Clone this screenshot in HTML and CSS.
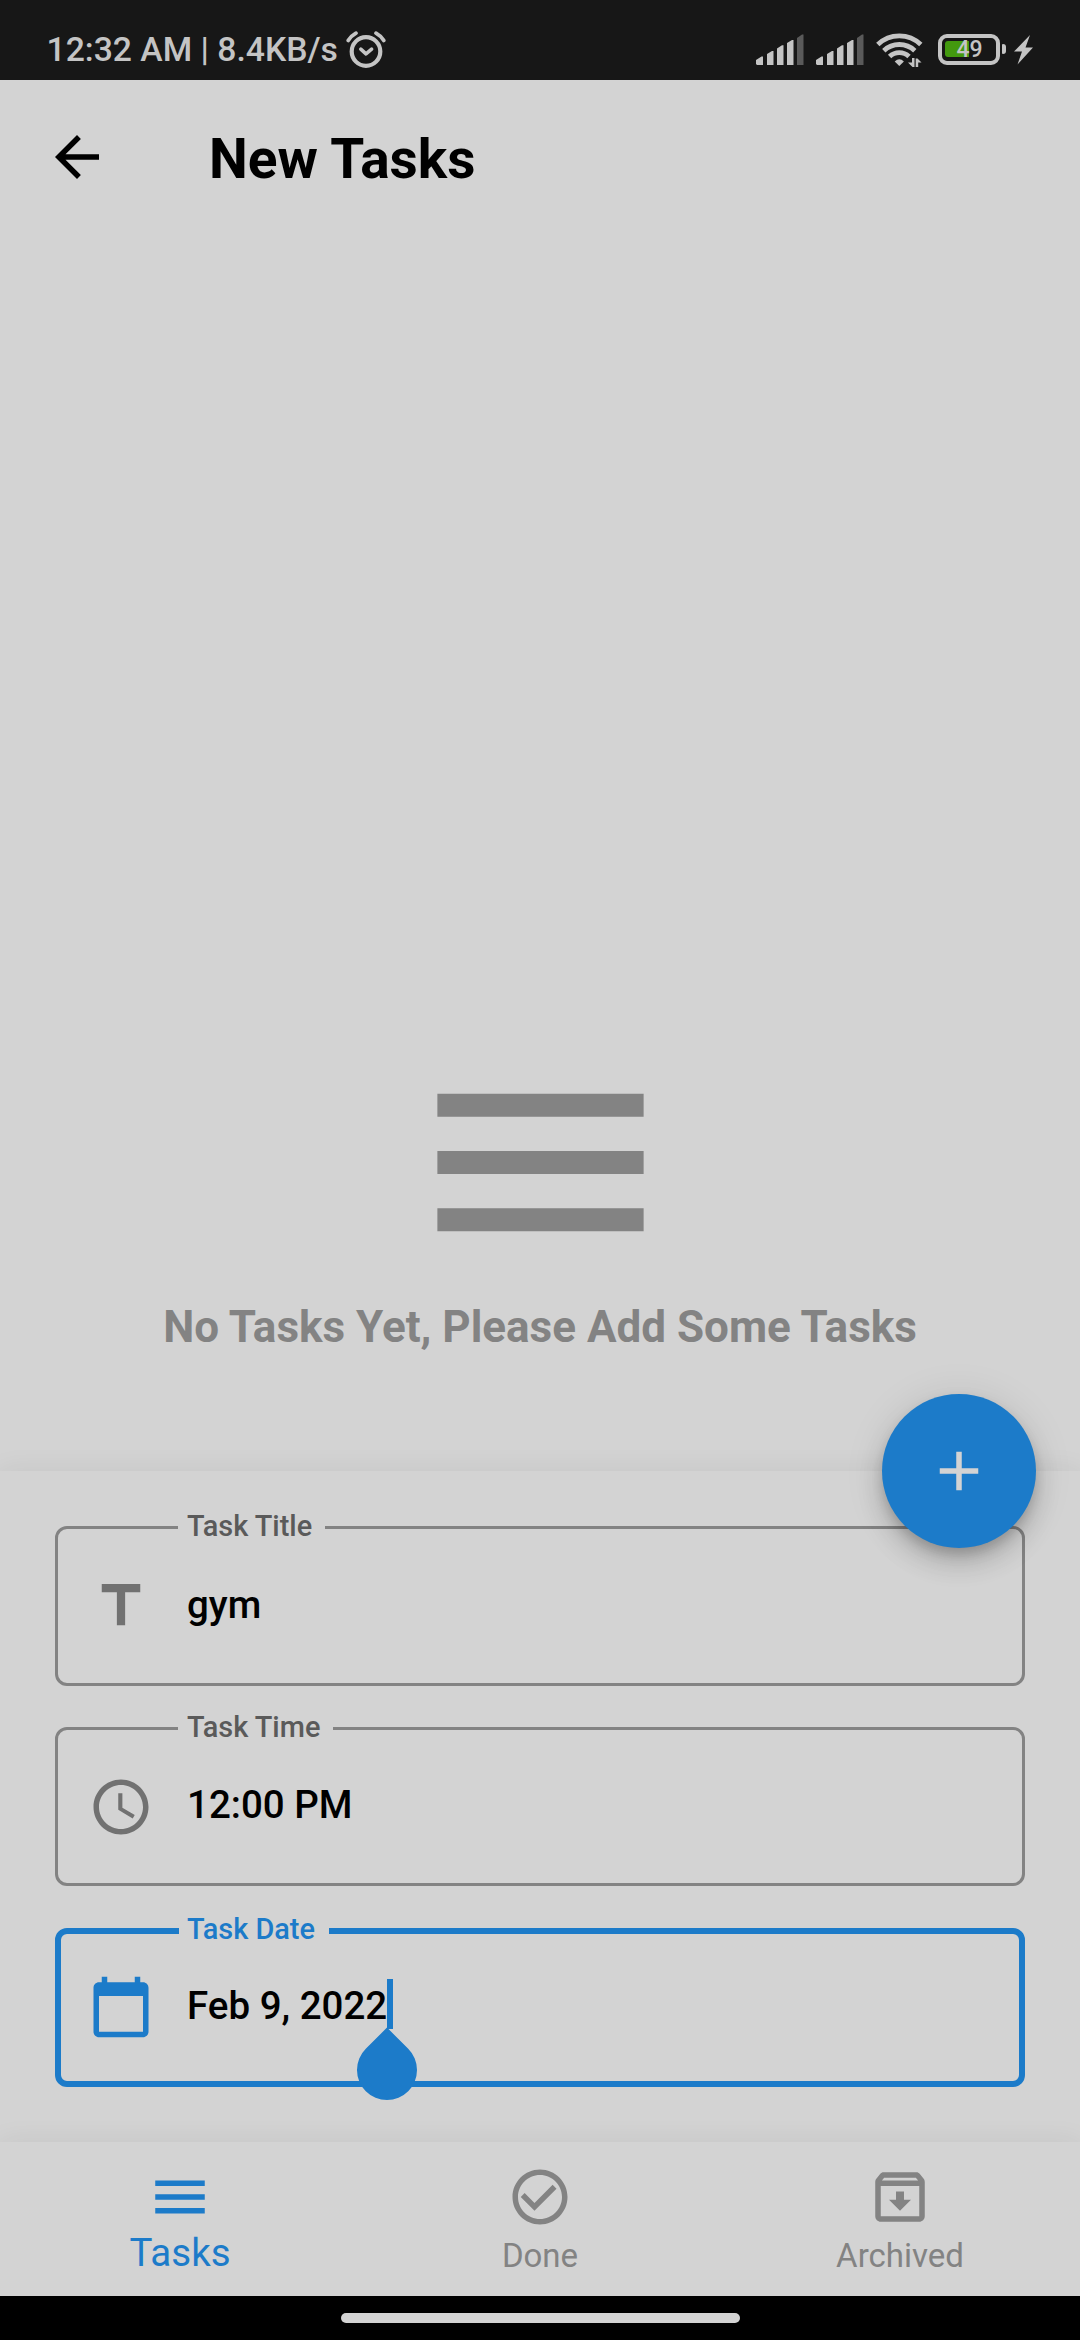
FILE: index.html
```html
<!DOCTYPE html>
<html lang="en">
<head>
<meta charset="utf-8">
<title>New Tasks</title>
<link rel="stylesheet" href="styles.css">
</head>
<body>
<div class="screen">
  <header class="status">
    <div class="status-left">
      <span class="status-text">12:32 AM | 8.4KB/s</span>
      <svg class="alarm" viewBox="0 0 40 38" fill="none" stroke="#c4c4c4" stroke-linecap="round">
        <circle cx="20" cy="20.500" r="14.300" stroke-width="4.200"/>
        <path d="M2.200 9.500Q5 5 10 2.200M37.800 9.500Q35 5 30 2.200" stroke-width="3.800"/>
        <path d="M14.800 18.200l5.200 4.600 5.600-4.600" stroke-width="3.600" stroke-linejoin="round"/>
      </svg>
    </div>
    <div class="status-right">
      <svg class="signal" viewBox="0 0 48 31" fill="#c4c4c4">
        <path d="M0 30V26L5.500 22.500H7V31H1ZM11 31V20L16 17H17.500V31ZM21 31V14.500L26 11.300H27.500V31ZM31 31V9L36 6H37.500V31Z"/>
        <path d="M41 31V4L46 .5H47.500V31Z" fill="#5a5a5a"/>
      </svg>
      <svg class="signal signal-second" viewBox="0 0 48 31" fill="#c4c4c4">
        <path d="M0 30V26L5.500 22.500H7V31H1ZM11 31V20L16 17H17.500V31ZM21 31V14.500L26 11.300H27.500V31ZM31 31V9L36 6H37.500V31Z"/>
        <path d="M41 31V4L46 .5H47.500V31Z" fill="#5a5a5a"/>
      </svg>
      <svg class="wifi" viewBox="0 0 47 36" fill="none" stroke="#c4c4c4" stroke-width="4.800">
        <path d="M1.800 12.500A31 31 0 0 1 44.800 12.500"/>
        <path d="M7.800 18.700A22.500 22.500 0 0 1 38.800 18.700"/>
        <path d="M13.600 24.500A14 14 0 0 1 33 24.500"/>
        <path d="M23.300 34L18.700 29.500Q23.300 25 27.900 29.500Z" fill="#c4c4c4" stroke="none"/>
        <path d="M36 26H38.500V35H36.500L32 30.500H36ZM39.700 26.500H41.500L45.500 30.500H42.200V35H39.700Z" fill="#c4c4c4" stroke="none"/>
      </svg>
      <div class="battery"><span class="battery-level"></span><span class="battery-text">49</span></div>
      <span class="battery-nub"></span>
      <svg class="bolt" viewBox="0 0 19 30" fill="#c4c4c4"><path d="M16 0L0 16.500H8L3.500 29.500L19 12.500H11.500Z"/></svg>
    </div>
  </header>

  <div class="appbar">
    <svg class="icon" viewBox="0 0 24 24"><path d="M20 11H7.830l5.590-5.590L12 4l-8 8 8 8 1.410-1.410L7.830 13H20v-2z"/></svg>
    <h1 class="title">New Tasks</h1>
  </div>

  <main class="empty">
    <svg class="empty-icon" viewBox="0 0 24 24"><path d="M3 18h18v-2H3v2zm0-5h18v-2H3v2zm0-7v2h18V6H3z"/></svg>
    <p class="empty-text">No Tasks Yet, Please Add Some Tasks</p>
  </main>

  <section class="sheet">
    <button class="fab" aria-label="Add"><svg class="icon" viewBox="0 0 24 24"><path d="M19 13h-6v6h-2v-6H5v-2h6V5h2v6h6v2z"/></svg></button>
    <fieldset class="field">
      <legend class="label">Task Title</legend>
      <div class="row">
        <svg class="icon" viewBox="0 0 24 24"><path d="M5 4v3h5.500v12h3V7H19V4z"/></svg>
        <span class="value">gym</span>
      </div>
    </fieldset>
    <fieldset class="field">
      <legend class="label">Task Time</legend>
      <div class="row">
        <svg class="icon" viewBox="0 0 24 24"><path d="M11.990 2C6.470 2 2 6.480 2 12s4.470 10 9.990 10C17.520 22 22 17.520 22 12S17.520 2 11.990 2zM12 20c-4.420 0-8-3.580-8-8s3.580-8 8-8 8 3.580 8 8-3.580 8-8 8zm-1-13v6l5.250 3.150.75-1.230-4.500-2.670V7z"/></svg>
        <span class="value">12:00 PM</span>
      </div>
    </fieldset>
    <fieldset class="field focused">
      <legend class="label">Task Date</legend>
      <div class="row">
        <svg class="icon" viewBox="0 0 24 24"><path d="M20 3h-1V1h-2v2H7V1H5v2H4c-1.100 0-2 .9-2 2v16c0 1.100.9 2 2 2h16c1.100 0 2-.9 2-2V5c0-1.100-.9-2-2-2zm0 18H4V8h16v13z"/></svg>
        <span class="value">Feb 9, 2022<i class="caret"></i><i class="handle"></i></span>
      </div>
    </fieldset>
  </section>

  <nav class="nav">
    <a class="tab active">
      <svg class="icon" viewBox="0 0 24 24"><path d="M3 18h18v-2H3v2zm0-5h18v-2H3v2zm0-7v2h18V6H3z"/></svg>
      <span class="tab-label">Tasks</span>
    </a>
    <a class="tab">
      <svg class="icon" viewBox="0 0 24 24"><path d="M16.590 7.580L10 14.170l-3.590-3.580L5 12l5 5 8-8zM12 2C6.480 2 2 6.480 2 12s4.480 10 10 10 10-4.480 10-10S17.520 2 12 2zm0 18c-4.420 0-8-3.580-8-8s3.580-8 8-8 8 3.580 8 8-3.580 8-8 8z"/></svg>
      <span class="tab-label">Done</span>
    </a>
    <a class="tab">
      <svg class="icon" viewBox="0 0 24 24"><path d="M20.540 5.230l-1.390-1.680C18.880 3.210 18.470 3 18 3H6c-.47 0-.88.21-1.160.55L3.460 5.230C3.170 5.570 3 6.020 3 6.500V19c0 1.100.9 2 2 2h14c1.100 0 2-.9 2-2V6.500c0-.48-.17-.93-.46-1.270zM6.240 5h11.520l.83 1H5.420l.82-1zM5 19V8h14v11H5zm8.450-9h-2.900v3H8l4 4 4-4h-2.550z"/></svg>
      <span class="tab-label">Archived</span>
    </a>
  </nav>
  <footer class="gesture"><span class="pill"></span></footer>
</div>
</body>
</html>
```

FILE: styles.css
```css
* { box-sizing: border-box; }
body { margin: 0; font-family: Roboto, sans-serif; background: #d3d3d3; }
svg { display: block; flex: none; overflow: visible; }
.screen { width: 1080px; height: 2340px; display: flex; flex-direction: column; overflow: hidden; background: #d3d3d3; }
.icon { width: 66px; height: 66px; fill: currentColor; }

.status { height: 80px; flex: none; display: flex; justify-content: space-between; background: #171717; color: #c4c4c4; }
.status-left { display: flex; padding: 31px 0 0 46.500px; }
.status-text { font-size: 33.700px; line-height: 38px; font-weight: 500; white-space: nowrap; width: 299.500px; }
.alarm { width: 40px; height: 38px; }
.status-right { display: flex; align-items: flex-start; padding: 0 47px 0 0; }
.signal { width: 48px; height: 31px; margin-top: 34px; }
.signal-second { margin-left: 12px; }
.wifi { width: 47px; height: 36px; margin: 32px 0 0 12px; }
.battery { position: relative; width: 62px; height: 31px; margin: 33.500px 0 0 15px; border: 4px solid #c4c4c4; border-radius: 9px; padding: 3px; display: flex; }
.battery-level { width: 24px; height: 16px; background: #43990f; border-radius: 3px 0 0 3px; }
.battery-text { position: absolute; left: 1px; right: 0; top: 0; text-align: center; font-size: 23px; line-height: 24px; font-weight: 500; }
.battery-nub { width: 4px; height: 10px; margin: 44px 8px 0 2px; border-radius: 1px 3px 3px 1px; background: #c4c4c4; }
.bolt { width: 19px; height: 30px; margin-top: 35px; }

.appbar { height: 154px; flex: none; display: flex; align-items: center; padding-left: 44px; color: #000; }
.title { margin: 3px 0 0 99px; font-size: 55px; line-height: 64px; font-weight: 700; }

.empty { flex: 1; display: flex; flex-direction: column; align-items: center; padding-top: 790.500px; color: #838383; }
.empty-icon { width: 275px; height: 275px; fill: currentColor; }
.empty-text { margin: 0; font-size: 44px; line-height: 54px; font-weight: 700; white-space: nowrap; }

.sheet { position: relative; height: 671px; flex: none; display: flex; flex-direction: column; gap: 41.250px; padding: 55px; background: #d3d3d3; box-shadow: 0 0 26px rgba(0,0,0,.07); }
.fab { position: absolute; right: 44px; top: -77px; width: 154px; height: 154px; border: 0; border-radius: 50%; display: grid; place-items: center; background: #1c7bc9; color: #d3d3d3; box-shadow: 0 8px 14px -3px rgba(0,0,0,.2), 0 16px 27px rgba(0,0,0,.14), 0 3px 40px rgba(0,0,0,.1); }
.field { margin: 0; padding: 0; min-width: 0; height: 159.500px; border: 3px solid #838383; border-radius: 12px; color: #717171; }
.label { height: 3px; line-height: 0; margin-left: 120px; padding: 0 13px 0 9px; font-size: 28.900px; font-weight: 500; color: #5a5a5a; white-space: nowrap; }
.row { display: flex; align-items: center; gap: 33px; height: 154px; padding-left: 30px; }
.value { position: relative; margin-top: -4px; color: #000; font-size: 38.500px; line-height: 45px; font-weight: 500; white-space: nowrap; }
.focused { border: 6px solid #1c7bc9; color: #1c7bc9; }
.focused .label { height: 6px; line-height: 3px; margin-left: 118px; padding: 0 14px 0 8px; color: #1c7bc9; }
.focused .row { height: 147px; padding-left: 27px; }
.caret { position: absolute; left: 200px; top: -4px; width: 6px; height: 50px; background: #1c7bc9; }
.handle { position: absolute; left: 170px; top: 57px; width: 60px; height: 60px; border-radius: 0 50% 50% 50%; background: #1c7bc9; transform: rotate(45deg); }

.nav { position: relative; height: 154px; flex: none; display: flex; background: #d3d3d3; box-shadow: 0 0 26px rgba(0,0,0,.07); }
.tab { flex: 1; display: flex; flex-direction: column; align-items: center; padding: 22px 0 21px; justify-content: space-between; color: #838383; }
.tab-label { font-size: 33px; line-height: 39px; }
.active { color: #1c7bc9; }
.active .tab-label { font-size: 38.500px; line-height: 45px; }
.gesture { position: relative; height: 44px; flex: none; display: flex; justify-content: center; padding-top: 17px; background: #000; }
.pill { width: 399px; height: 10px; border-radius: 5px; background: #d3d3d3; }
```
